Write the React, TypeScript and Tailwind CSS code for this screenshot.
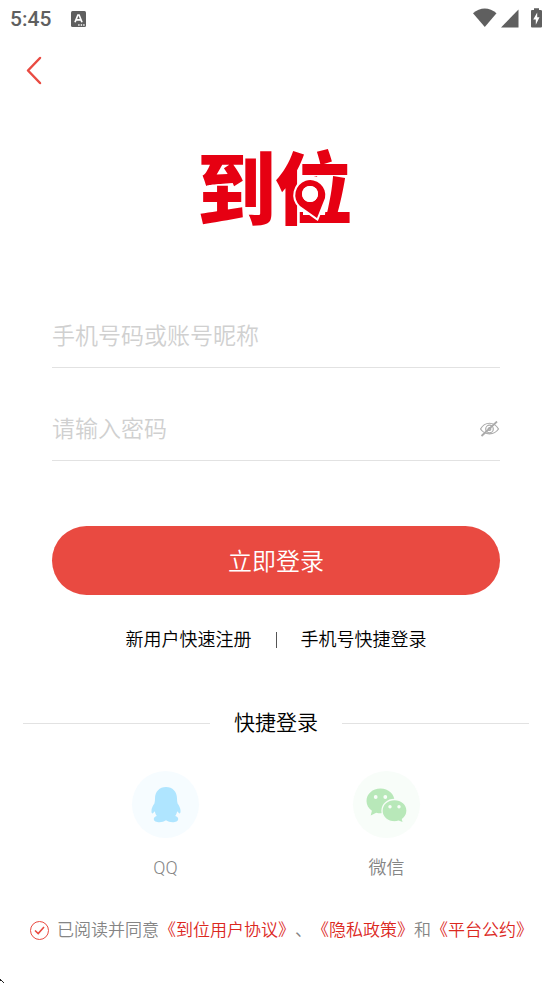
import { useState } from "react";

function StatusBar() {
  return (
    <div className="flex h-[38px] items-center justify-between pl-[10px] pr-[9px] text-[#5f5f5f]">
      <div className="flex items-center gap-5">
        <span className="font-['Roboto',sans-serif] text-[21px] font-medium leading-6">5:45</span>
        <svg width="15" height="16" viewBox="0 0 15 16" aria-hidden="true">
          <rect width="15" height="16" rx="1.5" fill="currentColor" />
          <path d="M4 11.3 6.9 4h1.2L11 11.3M5.2 8.8h4.6" fill="none" stroke="#fff" strokeWidth="1.7" />
          <path d="M7.2 14h1.4M9.7 14h1.4M12.2 14h1.4" stroke="#fff" strokeWidth="1.4" />
        </svg>
      </div>
      <svg width="70" height="22" viewBox="0 0 70 22" fill="currentColor" aria-hidden="true">
        <path d="M0 5.200C7-1.200 16.500-1.200 23.500 5.200L11.800 19Z" />
        <path d="M45.500 1.500V19.500H28Z" />
        <path d="M61 2V.300h5V2h1.500q1.500 0 1.500 1V18.500q0 1-1 1H59q-1 0-1-1V3q0-1 1-1Z" />
        <path d="M64.200 4.500 60.200 11.500H62.800V16.800L66.500 9.300H64.200Z" fill="#fff" />
      </svg>
    </div>
  );
}

function Logo() {
  return (
    <svg width="160" height="124" viewBox="0 -24 160 124" role="img" aria-label="到位">
      <g
        className="font-['Noto_Sans_CJK_SC',sans-serif]"
        fontSize="79"
        fontWeight="900"
        fill="#e60012"
      >
        <text x="1" y="73">到</text>
        <text x="78" y="73">位</text>
      </g>
      <path d="M107 31H132L129 69H107Z" fill="#fff" />
      <path
        fillRule="evenodd"
        d="M121 72 104 60A15 15 0 1 1 129 52ZM114 40a8 8 0 1 0 .1 0Z"
        fill="#e60012"
        stroke="#fff"
        strokeWidth="4"
        paintOrder="stroke"
      />
      <circle cx="114" cy="48" r="8" fill="#fff" />
    </svg>
  );
}

function EyeOff() {
  return (
    <svg width="20" height="16" viewBox="0 0 20 16" fill="none" stroke="#aaa" strokeWidth="1.200" aria-hidden="true">
      <path d="M.500 8C5 .300 14 .300 18.500 8 14 14.500 5 14.500.500 8Z" />
      <circle cx="9.500" cy="8" r="3.800" />
      <circle cx="9.500" cy="8" r="1.300" />
      <path d="M1.500 15 17 .500" strokeWidth="1.800" />
    </svg>
  );
}

function QQIcon() {
  return (
    <svg width="30" height="36" viewBox="0 0 30 36" fill="#afe5ff" aria-hidden="true">
      <path d="M15 0C8.500 0 4 4.800 4 11.200c0 2-.1 3.600-.6 5.300C1.500 19 .2 22 .5 24.800c.1 1.500.7 2 1.300 1.500.8-.5 1.500-1.300 2-2 .5 2.200 1 3.500 2 4.700-2 .6-3 1.500-3 3 0 4 8.500 4.200 12.200 1.300 3.700 2.900 12.200 2.700 12.200-1.300 0-1.500-1-2.400-3-3 1-1.200 1.500-2.500 2-4.700.5.700 1.200 1.500 2 2 .6.500 1.200 0 1.300-1.500.3-2.800-1-5.800-2.900-8.300-.5-1.700-.6-3.300-.6-5.300C26 4.800 21.500 0 15 0Z" />
    </svg>
  );
}

function WeChatIcon() {
  return (
    <svg width="42" height="36" viewBox="0 0 42 36" aria-hidden="true">
      <path d="M14.500 1.500C6.500 1.500.500 7 .500 14c0 4 2 7.300 5.400 9.700L4.700 28.500 10.200 25.700c1.400.4 2.800.6 4.300.6 8 0 14-5.400 14-12.300S22.500 1.500 14.500 1.500Z" fill="#b8e8b9" />
      <path d="M28.500 12.500c-7 0-12.500 4.900-12.500 11.200S21.500 34.800 28.500 34.800c1.500 0 2.900-.2 4.200-.6l4.800 2-1-4C39.300 30 41 27.100 41 23.700 41 17.400 35.500 12.500 28.500 12.500Z" fill="#b8e8b9" stroke="#f8fdf9" strokeWidth="1.300" />
      <g fill="#f8fdf9">
        <circle cx="9.700" cy="10" r="1.900" />
        <circle cx="19.300" cy="10" r="1.900" />
        <circle cx="24" cy="19.800" r="1.700" />
        <circle cx="33" cy="19.800" r="1.700" />
      </g>
    </svg>
  );
}

export default function App() {
  const [showPassword, setShowPassword] = useState(false);
  const [agreed, setAgreed] = useState(true);

  return (
    <div className="relative min-h-screen bg-white font-['Roboto','Noto_Sans_CJK_SC',sans-serif] font-[350] text-black">
      <StatusBar />
      <header className="flex h-16 items-center pl-6">
        <button type="button" aria-label="返回" className="flex h-8 w-5 items-center justify-center">
          <svg width="18" height="30" viewBox="0 0 18 30" fill="none" stroke="#e94b42" strokeWidth="2.500" strokeLinecap="round" strokeLinejoin="round" aria-hidden="true">
            <path d="M15 3 3 15.500 15 28" />
          </svg>
        </button>
      </header>

      <main>
        <h1 className="flex justify-center pt-5">
          <Logo />
        </h1>

        <form className="px-[52px] pt-[59px]" onSubmit={(e) => e.preventDefault()}>
          <div className="flex h-[63px] items-center border-b border-[#e2e2e2]">
            <input
              type="text"
              aria-label="手机号码或账号昵称"
              placeholder="手机号码或账号昵称"
              className="h-10 min-w-0 flex-1 bg-transparent text-[23px] leading-8 outline-none placeholder:text-[#d0d0d0]"
            />
          </div>
          <div className="mt-[30px] flex h-[63px] items-center border-b border-[#e2e2e2]">
            <input
              type={showPassword ? "text" : "password"}
              aria-label="请输入密码"
              placeholder="请输入密码"
              className="h-10 min-w-0 flex-1 bg-transparent text-[23px] leading-8 outline-none placeholder:text-[#d0d0d0]"
            />
            <button type="button" aria-label="显示密码" aria-pressed={showPassword} onClick={() => setShowPassword(!showPassword)}>
              <EyeOff />
            </button>
          </div>
          <button type="submit" className="mt-[65px] h-[69px] w-full rounded-full bg-[#e94a41] pt-0.5 text-[24px] leading-8 text-white">
            立即登录
          </button>
        </form>

        <nav className="mt-[31px] flex items-center justify-center gap-6 text-[18px] leading-7">
          <a href="#register">新用户快速注册</a>
          <span className="h-4 w-px bg-[#555]" />
          <a href="#phone">手机号快捷登录</a>
        </nav>

        <section>
          <div className="mt-[53px] flex items-center gap-6 px-[23px]">
            <span className="h-px flex-1 bg-[#e2e2e2]" />
            <h2 className="text-[21px] leading-8">快捷登录</h2>
            <span className="h-px flex-1 bg-[#e2e2e2]" />
          </div>
          <div className="mt-8 grid grid-cols-2 px-[55px] text-[18px] leading-7 text-[#858585]">
            <button type="button" className="flex flex-col items-center gap-4">
              <span className="flex size-[67px] items-center justify-center rounded-full bg-[#f6fcff]">
                <QQIcon />
              </span>
              QQ
            </button>
            <button type="button" className="flex flex-col items-center gap-4">
              <span className="flex size-[67px] items-center justify-center rounded-full bg-[#f8fdf9]">
                <WeChatIcon />
              </span>
              微信
            </button>
          </div>
        </section>

        <div className="mt-9 flex items-center gap-2 whitespace-nowrap pl-[30px] text-[17px] leading-6 text-[#858585] [text-spacing-trim:space-all]">
          <span className="grid size-[19px] shrink-0 place-items-center">
            <input
              id="agree"
              type="checkbox"
              checked={agreed}
              onChange={(e) => setAgreed(e.target.checked)}
              className="peer col-start-1 row-start-1 size-[19px] appearance-none rounded-full border border-[#e94a41]"
            />
            <svg width="11" height="9" viewBox="0 0 11 9" fill="none" stroke="#e94a41" strokeWidth="1.600" className="pointer-events-none invisible col-start-1 row-start-1 peer-checked:visible" aria-hidden="true">
              <path d="M1 4.500 4.200 7.500 10 1" />
            </svg>
          </span>
          <p>
            <label htmlFor="agree">已阅读并同意</label>
            <a href="#agreement" className="text-[#dc281e]">《到位用户协议》</a>、
            <a href="#privacy" className="text-[#dc281e]">《隐私政策》</a>和
            <a href="#platform" className="text-[#dc281e]">《平台公约》</a>
          </p>
        </div>
      </main>

      <svg className="absolute bottom-0 left-0" width="4" height="4" viewBox="0 0 4 4" aria-hidden="true">
        <path d="M0 0h1v1h1v1h1v1h1v1H3V3H2V2H0Z" fill="#222" />
      </svg>
    </div>
  );
}
